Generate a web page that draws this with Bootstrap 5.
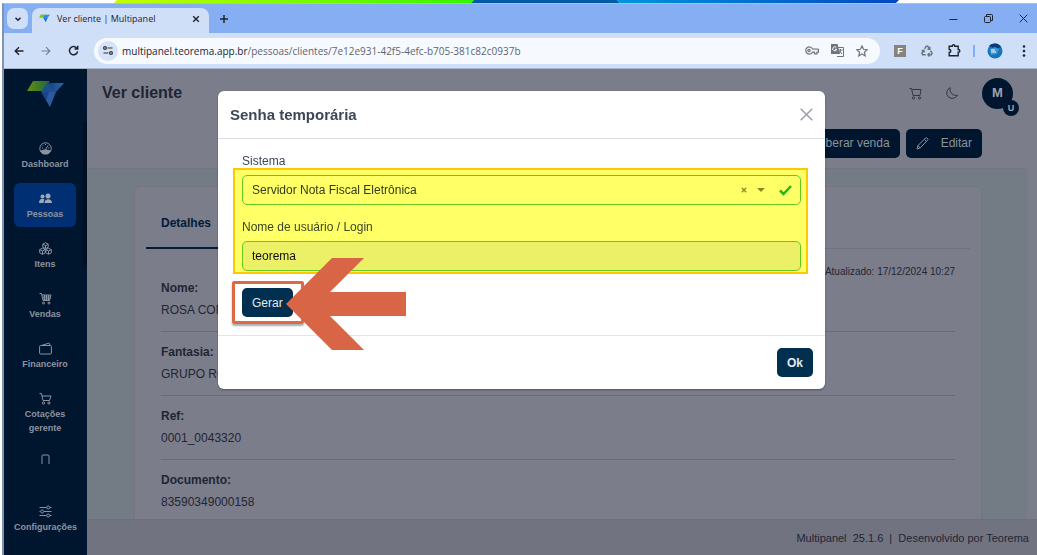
<!DOCTYPE html>
<html lang="pt-BR">
<head>
<meta charset="utf-8">
<meta name="viewport" content="width=device-width, initial-scale=1">
<title>Ver cliente | Multipanel</title>
<link href="https://cdn.jsdelivr.net/npm/bootstrap@5.3.0/dist/css/bootstrap.min.css" rel="stylesheet">
<style>
  :root { --navy: #00162f; --dim: #7c7d8b; --ink: #1f2633; --line: #696b7a; }
  body { font-family: "Liberation Sans", Arial, sans-serif; font-size: 12px; line-height: 16px; color: var(--ink); background: #fff; fill: none; stroke: currentColor; }
  svg { display: block; flex: none; }
  button { font: inherit; }
  .icon-btn { border: 0; padding: 0; background: none; color: inherit; display: flex; align-items: center; justify-content: center; }
  .screen { height: 100vh; overflow: hidden; }
  .strip { height: 3px; flex: none; }
  .strip svg { width: 100%; height: 3px; stroke: none; }
  .browser { margin-left: 2px; border-left: 2px solid #7f93b5; border-top: 1px solid #a9c0e6; min-height: 0; }

  .chrome { font-family: "Open Sans", "Noto Sans", sans-serif; font-size: 10px; color: #1f2430; }
  .tab-strip { height: 29px; background: #86aef2; }
  .tab-menu { width: 21px; height: 21px; border-radius: 7px; background: #cfdff8; margin: 4px 4px 0 3px; }
  .page-tab { width: 177px; height: 25px; margin-top: 4px; padding: 0 9px 4px 7px; border-radius: 8px 8px 0 0; background: #cfdff8; font-size: 9px; gap: 7px; }
  .win-controls { gap: 26px; margin-right: 9px; }
  .toolbar { height: 36px; background: #cfdff8; border-bottom: 1px solid #a9b4c9; }
  .nav-controls { gap: 17px; margin: 0 15px 0 10px; }
  .address { height: 26px; border-radius: 13px; background: #f6f9fe; color: #5f6570; padding: 0 12px 0 4px; }
  .address b { font-weight: 400; color: #1f2430; }
  .address-icons { gap: 12px; }
  .site-info { width: 20px; height: 20px; border-radius: 50%; background: #d6e2f8; color: #333; }
  .extensions { gap: 15px; margin: 0 11px 0 14px; }
  .profile-group { gap: 12px; }
  .ext-f { width: 12px; height: 12px; background: #85837e; color: #fff; font: bold 9px/12px "Liberation Sans", sans-serif; }

  .side { width: 83px; background: var(--navy); color: #8c93a0; font-size: 9px; line-height: 14px; font-weight: 700; }
  .side a { color: inherit; text-decoration: none; width: 62px; min-height: 44px; padding: 9px 0 4px; border-radius: 6px; gap: 2px; text-align: center; flex: none; }
  .side a.active { background: #003073; }
  .brand { height: 50px; }
  .menu { height: 345px; padding: 14px 0 0 3px; gap: 6px; overflow: hidden; border-right: 4px solid transparent; border-image: linear-gradient(transparent 4px, #000f22 4px 146px, transparent 146px) 1; }
  .side a.config { width: 76px; margin-bottom: 15px; }

  .app-main { background: var(--dim); min-width: 0; }
  .page-head { height: 49px; padding: 0 6px 0 15px; margin-right: 10px; border-bottom: 1px solid #857d86; }
  .page-head h1 { font-size: 16px; line-height: 20px; font-weight: 700; margin: 0; }
  .page-head svg { color: #343846; }
  .avatar { width: 31px; height: 31px; border-radius: 50%; background: var(--navy); color: #a0a4ae; font-size: 13px; font-weight: 700; }
  .avatar span { width: 16px; height: 16px; right: -6px; bottom: -7px; border-radius: 50%; background: var(--navy); font-size: 9px; line-height: 16px; text-align: center; }
  .actions { height: 50px; padding-right: 55px; gap: 6px; }
  .actions .btn { --bs-btn-bg: var(--navy); --bs-btn-color: #8d929d; --bs-btn-hover-bg: #002149; --bs-btn-hover-color: #aab; height: 29px; padding: 0 10px; border: 0; border-radius: 5px; font-size: 12px; }
  .canvas { background: #737b84; margin-right: 10px; padding: 17px 45px 0 47px; overflow: hidden; min-height: 0; border-top: 1px solid #707783; }
  .sheet { background: var(--dim); border: 1px solid #77737f; border-radius: 6px 6px 0 0; padding: 10px 11px; min-height: 100%; }
  .sheet-tabs { border-bottom: 1px solid #6b7480; }
  .sheet-tabs button { height: 52px; padding: 2px 15px 0; font-size: 12px; font-weight: 700; color: #001c3a; border-bottom: 2px solid #001c3a; width: 120px; justify-content: start; margin-bottom: -1px; }
  .fields { padding: 15px 15px 0; margin: 0; }
  .updated { font-size: 10px; }
  .field-row { height: 64px; padding-top: 12px; border-bottom: 1px solid var(--line); }
  .field-row.first { height: 52px; padding-top: 0; }
  .field-row dt { font-weight: 700; line-height: 16px; margin-bottom: 6px; }
  .field-row dd { margin: 0; }
  .foot { height: 36px; background: #727380; border-top: 1px solid #6b707d; padding-right: 8px; font-size: 11px; }

  .overlay { inset: 0; padding: 22px 16px 0 18px; z-index: 5; }
  .temp-pass { max-width: 607px; background: #fff; border-radius: 6px; color: #3c4757; box-shadow: 0 1px 2px #0005; }
  .temp-pass header { height: 48px; padding: 0 12px; border-bottom: 1px solid #dcdee6; }
  .temp-pass h2 { font-size: 15px; line-height: 20px; font-weight: 700; margin: 0; }
  .pass-body { padding: 14px 24px 18px; }
  .marked { margin-bottom: 17px; }
  .marked::after { content: ""; position: absolute; inset: 15px -7px -3px -9px; background: #ffff66; border: 2px solid #ffc800; mix-blend-mode: multiply; pointer-events: none; }
  .marked label { display: block; line-height: 16px; margin-bottom: 6px; }
  .system-pick { margin-bottom: 14px; }
  .marked .form-select, .marked .form-control { height: 30px; padding: 0 9px; font-size: 12px; border: 1px solid #66c94b; border-radius: 5px; color: #333b3c; background: #fff; }
  .marked .form-control { background: #ebf0ff; color: #111; }
  .select-marks { right: 9px; top: 0; height: 30px; gap: 10px; color: #8a8a62; pointer-events: none; }
  .temp-pass .btn { --bs-btn-bg: #002f50; --bs-btn-color: #e3eaf1; --bs-btn-hover-bg: #00416f; --bs-btn-hover-color: #fff; height: 29px; padding: 0 10px; border: 0; border-radius: 5px; font-size: 12px; }
  .ring { inset: -7px -11px -7px -10px; border: 3px solid #dc6a47; border-radius: 2px; box-shadow: 0 2px 2px #0005; pointer-events: none; }
  .pointer { left: 44px; top: -30px; z-index: 2; pointer-events: none; }
  .pass-foot { height: 54px; padding: 0 12px; border-top: 1px solid #e4e5e8; }
</style>
</head>
<body>
<div class="screen d-flex flex-column">
  <div class="strip">
    <svg viewBox="0 0 1037 3" preserveAspectRatio="none" aria-hidden="true">
      <defs>
        <linearGradient id="lime"><stop stop-color="#c6ff00"/><stop offset="1" stop-color="#35f500"/></linearGradient>
        <linearGradient id="sea"><stop stop-color="#0096dc"/><stop offset="1" stop-color="#0047c0"/></linearGradient>
      </defs>
      <path fill="url(#lime)" d="M117 0H474L471 3H114Z"/>
      <path fill="#005ba4" d="M474 0H617L620 3H471Z"/>
      <path fill="url(#sea)" d="M617 0H899L896 3H620Z"/>
    </svg>
  </div>
  <div class="browser flex-grow-1 d-flex flex-column">
    <div class="chrome">
      <div class="tab-strip d-flex">
        <button class="icon-btn tab-menu" aria-label="Pesquisar guias"><svg width="8" height="8" viewBox="0 0 8 8" stroke-width="1.5"><path d="M1.5 2.8 4 5.2l2.500-2.400"/></svg></button>
        <div class="page-tab d-flex align-items-center">
          <svg width="11" height="9" viewBox="0 0 37 27" stroke="none"><path fill="#7fc41c" d="M6 0h17l-8 11H0z"/><path fill="#1c86d8" d="m21 0 8 11H14z"/><path fill="#2f8cec" d="M22 1h15l-8 10h-3z"/><path fill="#1f6fe0" d="M14 11h15l-6 15z"/></svg>
          <span class="flex-grow-1 text-nowrap">Ver cliente | Multipanel</span>
          <button class="icon-btn" aria-label="Fechar guia"><svg width="8" height="8" viewBox="0 0 8 8" stroke-width="1.400"><path d="m1.200 1.200 5.600 5.600m0-5.600L1.200 6.800"/></svg></button>
        </div>
        <button class="icon-btn ms-2" aria-label="Nova guia"><svg width="12" height="10" viewBox="0 0 12 10" stroke-width="1.500"><path d="M7 1v8M3 5h8"/></svg></button>
        <div class="win-controls ms-auto d-flex align-items-center">
          <button class="icon-btn" aria-label="Minimizar"><svg width="9" height="10" viewBox="0 0 9 10"><path d="M.5 5.500h8"/></svg></button>
          <button class="icon-btn" aria-label="Restaurar"><svg width="9" height="9" viewBox="0 0 9 9"><rect x=".5" y="2.500" width="6" height="6" rx="1"/><path d="M2.500 2V.5h5q1 0 1 1v5H7"/></svg></button>
          <button class="icon-btn" aria-label="Fechar"><svg width="9" height="9" viewBox="0 0 9 9"><path d="m.7.7 7.600 7.600m0-7.600L.7 8.300"/></svg></button>
        </div>
      </div>
      <div class="toolbar d-flex align-items-center">
        <div class="nav-controls d-flex align-items-center">
          <button class="icon-btn" aria-label="Voltar"><svg width="10" height="10" viewBox="0 0 10 10" stroke-width="1.400"><path d="M9.500 5H1.500M5 1.200 1.200 5 5 8.800"/></svg></button>
          <button class="icon-btn opacity-50" aria-label="Avançar"><svg width="10" height="10" viewBox="0 0 10 10" stroke-width="1.200"><path d="M.5 5h8M5 1.200 8.800 5 5 8.800"/></svg></button>
          <button class="icon-btn" aria-label="Recarregar"><svg width="11" height="11" viewBox="0 0 11 11" stroke-width="1.500"><path d="M9 3.400A4.100 4.100 0 1 0 9.600 6.300M9.700.8v3.200H6.500"/></svg></button>
        </div>
        <div class="address flex-grow-1 d-flex align-items-center">
          <button class="icon-btn site-info" aria-label="Informações do site"><svg width="10" height="9" viewBox="0 0 10 9" stroke-width="1.200"><path d="M4.500 2H9.500M.5 7h5"/><circle cx="2" cy="2" r="1.400"/><circle cx="8" cy="7" r="1.400"/></svg></button>
          <span class="flex-grow-1 text-nowrap ms-1"><b>multipanel.teorema.app.br</b>/pessoas/clientes/7e12e931-42f5-4efc-b705-381c82c0937b</span>
          <div class="address-icons d-flex align-items-center text-secondary">
            <svg width="14" height="9" viewBox="0 0 14 9" stroke-width="1.200"><path d="M7.500 2.800A3.600 3.600 0 1 0 7.500 6.200H9.500V7.800H12V6.200h1.400V3.200z"/><circle cx="4" cy="4.500" r="1.200"/></svg>
            <svg width="13" height="13" viewBox="0 0 13 13"><path d="M7 3.500h5.500v9H6"/><path fill="currentColor" stroke="none" d="M0 0h6.500L9 10H0z"/><path stroke="#fff" d="M5.300 3.500A2 2 0 1 0 5.700 5.300H4"/><path d="M7.500 6h4M9.500 5v1c0 2-1 3-2 3.500M8.500 7l2.500 3"/></svg>
            <svg width="12" height="12" viewBox="0 0 12 12" stroke-width="1.200"><path d="m6 .9 1.500 3.400 3.700.4-2.800 2.500.8 3.700L6 9l-3.200 1.900.8-3.700L.8 4.700l3.700-.4z"/></svg>
          </div>
        </div>
        <div class="extensions d-flex align-items-center">
          <div class="ext-f text-center">F</div>
          <svg class="text-secondary" width="12" height="12" viewBox="0 0 12 12" stroke-width="1.500"><path d="M3.700 3.800 5.200 1.200h1.600l1.500 2.600M8.800 1.800v2.400H6.500M9.500 5.500l1.600 2.800-.8 1.500H7.500M8.600 8 7 9.800l1.600 1.700M4.800 9.800H1.700L.9 8.300l1.500-2.500M.7 6l2-.7.800 2"/></svg>
          <div class="profile-group d-flex align-items-center">
            <svg width="13" height="13" viewBox="0 0 13 13" stroke-width="1.400"><path d="M1.200 2.300h3c0-2 2.600-2 2.600 0h3.400v3.200c2.200 0 2.200 2.800 0 2.800v3.500h-9V8.500c2.200 0 2.200-3 0-3z"/></svg>
            <svg width="2" height="12" viewBox="0 0 2 12" stroke="#86aef2" stroke-width="2"><path d="M1 0v12"/></svg>
            <svg width="16" height="16" viewBox="0 0 16 16" stroke="none"><circle cx="8" cy="8" r="7.500" fill="#1776b9"/><path fill="#083e78" d="M2 3a7.500 7.500 0 0 1 12 1L9 6z"/><path fill="#3b97d3" d="m3 6 5-2 4 2-2 5-6 1z"/><path stroke="#fff" d="M4 7h4M4 9h5"/></svg>
          </div>
          <svg class="ms-1" width="4" height="12" viewBox="0 0 4 12" stroke="none" fill="#1f2430"><circle cx="2" cy="1.500" r="1.300"/><circle cx="2" cy="6" r="1.300"/><circle cx="2" cy="10.500" r="1.300"/></svg>
        </div>
      </div>
    </div>

    <div class="flex-grow-1 d-flex position-relative overflow-hidden">
      <nav class="side d-flex flex-column align-items-center flex-shrink-0">
        <div class="brand d-flex align-items-center">
          <svg width="37" height="27" viewBox="0 0 37 27" stroke="none">
            <defs>
              <linearGradient id="leaf"><stop stop-color="#6a8c10"/><stop offset="1" stop-color="#146a3c"/></linearGradient>
              <linearGradient id="wing"><stop stop-color="#174383"/><stop offset="1" stop-color="#2c66ab"/></linearGradient>
            </defs>
            <path fill="url(#leaf)" d="M6 0h17l-8 10H0z"/>
            <path fill="url(#wing)" d="M22 2h15l-8 9h-3z"/>
            <path fill="#1d4e90" d="m21 1 7 10H14z"/>
            <path fill="#1a4489" d="M14 11h9v15z"/>
            <path fill="#30589f" d="m22 11 7 0-6 15-4-7z"/>
          </svg>
        </div>
        <div class="menu w-100 d-flex flex-column align-items-center">
          <a href="#" class="d-flex flex-column align-items-center"><svg width="13" height="13" viewBox="0 0 13 13"><circle cx="6.500" cy="6.500" r="5.700"/><path fill="currentColor" d="M1.500 9q5-2.500 10 0l-2 2.500H3.500z"/><path d="m6.500 7.500 2.500-4M3 6h1M6.500 2v1M4 3.500l.7.700M9.200 6h1"/></svg>Dashboard</a>
          <a href="#" class="d-flex flex-column align-items-center active" aria-current="page"><svg width="13" height="13" viewBox="0 0 13 13" stroke="none" fill="#a0a7b5"><circle cx="3.500" cy="4.500" r="2"/><circle cx="9" cy="4" r="2.500"/><path d="M0 11c0-5 4-5 5.500-3.500Q4.500 9 4.500 11zM5.500 11c0-5 7.500-5 7.500 0z"/></svg>Pessoas</a>
          <a href="#" class="d-flex flex-column align-items-center"><svg width="13" height="13" viewBox="0 0 13 13"><path d="m6.500.7 2.700 1.500v3L6.500 6.700 3.800 5.200v-3zM3.500 6.200l2.800 1.400v3.200l-2.800 1.500-2.800-1.500V7.600zM9.500 6.200l2.800 1.400v3.200l-2.800 1.500-2.800-1.500V7.600zM3.800 2.200l2.700 1.400 2.700-1.400M6.500 3.600v3M.7 7.600 3.500 9l2.800-1.400M3.500 9v3M6.700 7.600 9.500 9l2.800-1.400M9.500 9v3"/></svg>Itens</a>
          <a href="#" class="d-flex flex-column align-items-center"><svg width="13" height="13" viewBox="0 0 13 13"><path d="M.5 1.500h2L4 8.500h6.500l1.500-5.500H3M3.500 5h8M4 7h7M5.500 3v5M7.500 3v5M9.500 3v5"/><circle cx="4.500" cy="11" r="1"/><circle cx="10" cy="11" r="1"/></svg>Vendas</a>
          <a href="#" class="d-flex flex-column align-items-center"><svg width="13" height="13" viewBox="0 0 13 13"><rect x=".6" y="3.500" width="11.800" height="8.500" rx="1"/><path d="M3 3.300 9.700 1.200q1-.2 1 .8v1.300"/></svg>Financeiro</a>
          <a href="#" class="d-flex flex-column align-items-center"><svg width="13" height="13" viewBox="0 0 13 13"><path d="M.5 1.500h2L4 8.500h6.500L12 4H3"/><circle cx="4.500" cy="11" r="1.100"/><circle cx="10" cy="11" r="1.100"/></svg>Cotações gerente</a>
          <a href="#" class="d-flex flex-column align-items-center" aria-label="Compras"><svg width="13" height="13" viewBox="0 0 13 13"><path d="M3 14V2q0-1 1-1h5q1 0 1 1v12"/></svg></a>
        </div>
        <a href="#" class="config mt-auto d-flex flex-column align-items-center"><svg width="13" height="13" viewBox="0 0 13 13"><path d="M.5 2.500h7M11 2.500h1.500M.5 6.500h1M5 6.500h7.500M.5 10.500h7M11 10.500h1.500"/><circle cx="9.200" cy="2.500" r="1.500"/><circle cx="3.200" cy="6.500" r="1.500"/><circle cx="9.200" cy="10.500" r="1.500"/></svg>Configurações</a>
      </nav>

      <main class="app-main flex-grow-1 d-flex flex-column">
        <div class="page-head d-flex align-items-center flex-shrink-0">
          <h1 class="flex-grow-1">Ver cliente</h1>
          <button class="icon-btn me-4" aria-label="Carrinho"><svg width="13" height="13" viewBox="0 0 13 13"><path d="M.5 1.500h2L4 8.500h7l1-6H3"/><circle cx="4.500" cy="11" r="1.100"/><circle cx="10.500" cy="11" r="1.100"/></svg></button>
          <button class="icon-btn me-4" aria-label="Modo escuro"><svg width="12" height="12" viewBox="0 0 12 12"><path d="M4.200.7A5.600 5.600 0 1 0 11.400 8.300 6 6 0 0 1 4.200.7z"/></svg></button>
          <button class="icon-btn avatar position-relative me-2" aria-label="Conta">M<span class="position-absolute">U</span></button>
        </div>
        <div class="actions d-flex align-items-center justify-content-end flex-shrink-0">
          <button class="btn">Liberar venda</button>
          <button class="btn d-flex align-items-center gap-2"><svg class="me-1" width="13" height="13" viewBox="0 0 13 13"><path d="m1 12 1-3.500L9.500 1q1-.7 2 .5.800 1 0 1.800L4.300 10.800zM8.300 2.300l2.400 2.400M2 8.700l2.200 2"/></svg>Editar</button>
        </div>
        <section class="canvas flex-grow-1">
          <div class="sheet">
            <div class="sheet-tabs d-flex"><button class="icon-btn">Detalhes</button></div>
            <dl class="fields">
              <div class="updated text-end">Atualizado: 17/12/2024 10:27</div>
              <div class="field-row first"><dt>Nome:</dt><dd>ROSA COM</dd></div>
              <div class="field-row"><dt>Fantasia:</dt><dd>GRUPO RO</dd></div>
              <div class="field-row"><dt>Ref:</dt><dd>0001_0043320</dd></div>
              <div class="field-row"><dt>Documento:</dt><dd>83590349000158</dd></div>
            </dl>
          </div>
        </section>
        <footer class="foot d-flex align-items-center justify-content-end flex-shrink-0">Multipanel&nbsp; 25.1.6&nbsp; |&nbsp; Desenvolvido por Teorema</footer>
      </main>

      <div class="overlay position-absolute">
        <div class="temp-pass mx-auto" role="dialog" aria-labelledby="pass-title">
          <header class="d-flex align-items-center justify-content-between">
            <h2 id="pass-title">Senha temporária</h2>
            <button class="icon-btn" aria-label="Fechar janela"><svg width="13" height="13" viewBox="0 0 13 13" stroke="#9a9dab" stroke-width="1.500"><path d="m.7.7 11.600 11.600m0-11.600L.7 12.300"/></svg></button>
          </header>
          <div class="pass-body">
            <div class="marked position-relative">
              <label for="sistema">Sistema</label>
              <div class="system-pick position-relative">
                <select id="sistema" class="form-select"><option>Servidor Nota Fiscal Eletrônica</option></select>
                <div class="select-marks position-absolute d-flex align-items-center">
                  <svg width="6" height="6" viewBox="0 0 6 6" stroke-width="1.300"><path d="m.8.8 4.400 4.400m0-4.400L.8 5.200"/></svg>
                  <svg class="me-1" width="8" height="4" viewBox="0 0 8 4" stroke="none" fill="currentColor"><path d="M0 0h8L4 4z"/></svg>
                  <svg width="13" height="11" viewBox="0 0 13 11" stroke="#22b53c" stroke-width="2.500"><path d="m1 5.500 3.500 3.500L12 1"/></svg>
                </div>
              </div>
              <label for="login">Nome de usuário / Login</label>
              <input id="login" class="form-control" value="teorema">
            </div>
            <div class="d-inline-block position-relative">
              <button class="btn">Gerar</button>
              <div class="ring position-absolute"></div>
              <svg class="pointer position-absolute" width="120" height="92" viewBox="0 0 120 92" stroke="none" fill="#d86545" aria-hidden="true"><path d="M0 46 46 0H78L44 34H120V58H44L78 92H46Z"/></svg>
            </div>
          </div>
          <div class="pass-foot d-flex align-items-center justify-content-end"><button class="btn fw-bold">Ok</button></div>
        </div>
      </div>
    </div>
  </div>
</div>
<script src="https://cdn.jsdelivr.net/npm/bootstrap@5.3.0/dist/js/bootstrap.bundle.min.js"></script>
</body>
</html>
